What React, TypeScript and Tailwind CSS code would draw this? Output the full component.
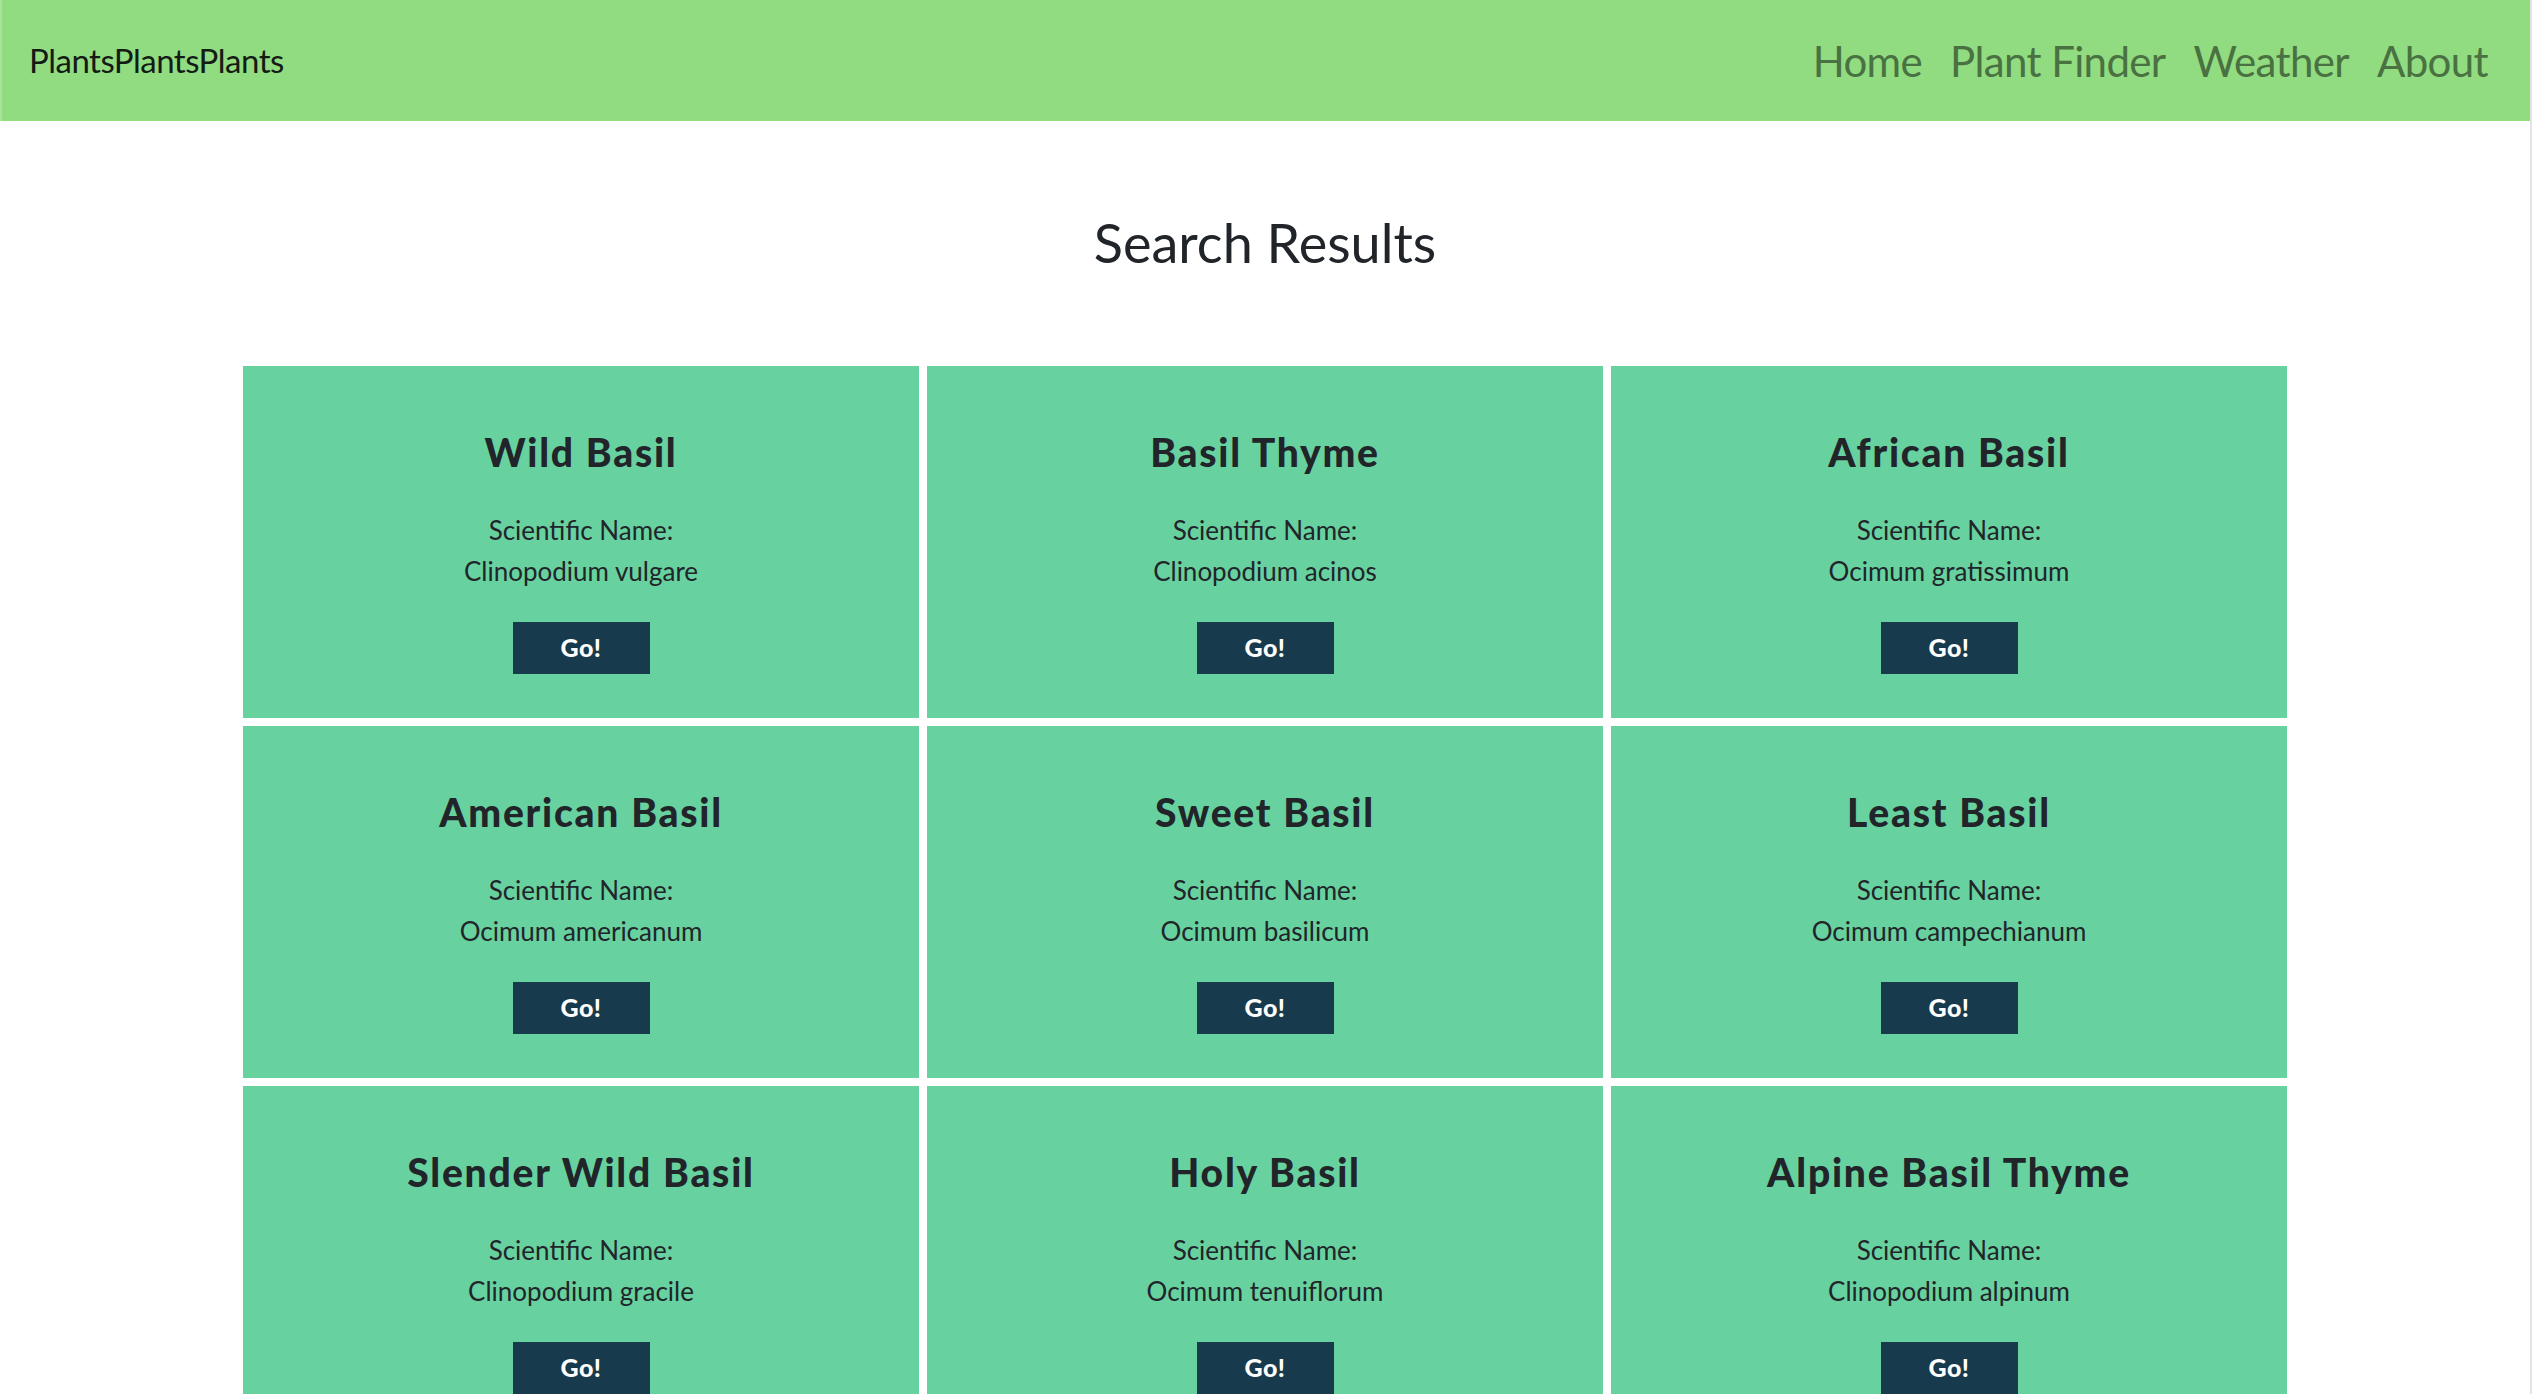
import React from 'react';

// plant search results, three per row
const plants = [
  { name: 'Wild Basil', sci: 'Clinopodium vulgare' },
  { name: 'Basil Thyme', sci: 'Clinopodium acinos' },
  { name: 'African Basil', sci: 'Ocimum gratissimum' },
  { name: 'American Basil', sci: 'Ocimum americanum' },
  { name: 'Sweet Basil', sci: 'Ocimum basilicum' },
  { name: 'Least Basil', sci: 'Ocimum campechianum' },
  { name: 'Slender Wild Basil', sci: 'Clinopodium gracile' },
  { name: 'Holy Basil', sci: 'Ocimum tenuiflorum' },
  { name: 'Alpine Basil Thyme', sci: 'Clinopodium alpinum' },
];

const navLinks = ['Home', 'Plant Finder', 'Weather', 'About'];

const PlantCard = ({ name, sci }: { name: string; sci: string }) => (
  <div className="flex h-[352px] flex-col items-center bg-[#68d1a0] pt-[65px] pb-[44px] text-[#212529]">
    <h2 className="text-[39px] font-black leading-[43px] tracking-[0.045em]">{name}</h2>
    <div className="mt-[36px] text-center text-[26px] leading-[41px]">
      <p>Scientific Name:</p>
      <p>{sci}</p>
    </div>
    <button className="mt-[30px] h-[52px] w-[137px] bg-[#173b4c] text-[25px] font-black tracking-[0.02em] text-white">
      Go!
    </button>
  </div>
);

export default function App() {
  return (
    <div
      className="h-screen overflow-hidden border-r-2 border-[#e4e4e4] bg-white"
      style={{ fontFamily: 'Lato, "Open Sans", sans-serif' }}
    >
      <nav className="flex h-[121px] items-center justify-between border-l-2 border-[#a6e397] bg-[#91dc80] pl-[27px] pr-[34px]">
        <a className="text-[33px] text-[#141a14] tracking-[-0.015em]">PlantsPlantsPlants</a>
        <ul className="flex items-center gap-[12px]">
          {navLinks.map((l) => (
            <li key={l} className="px-2 text-[42px] leading-[50px] text-[#4a7141] tracking-[-0.015em]">
              {l}
            </li>
          ))}
        </ul>
      </nav>

      <main className="flex flex-col items-center">
        <h1 className="mt-[90px] text-[54px] leading-[64px] text-[#212529]">Search Results</h1>
        <div className="mt-[91px] grid w-[2044px] grid-cols-3 gap-[8px]">
          {plants.map((p) => (
            <PlantCard key={p.name} name={p.name} sci={p.sci} />
          ))}
        </div>
      </main>
    </div>
  );
}
